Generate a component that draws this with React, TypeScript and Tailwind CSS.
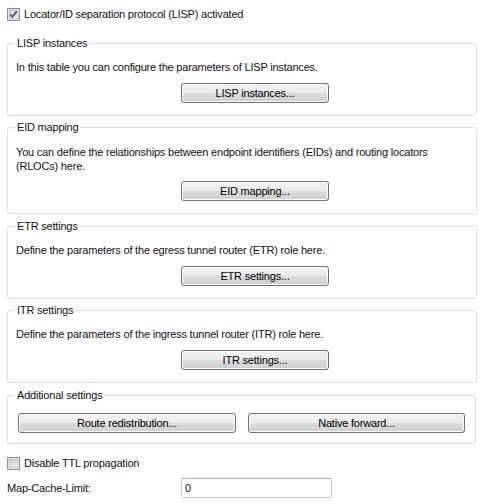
import React from "react";

function CheckBox({ checked }: { checked: boolean }) {
  return (
    <svg width="13" height="13" viewBox="0 0 13 13" className="shrink-0 block">
      <defs>
        <linearGradient id={checked ? "gc" : "gu"} x1="0" y1="0" x2="1" y2="1">
          <stop offset="0" stopColor={checked ? "#cbcfd5" : "#c8c8c8"} />
          <stop offset="1" stopColor={checked ? "#f4f6f8" : "#f0f0f0"} />
        </linearGradient>
      </defs>
      <rect x="0.5" y="0.5" width="12" height="12" fill="#fff" stroke="#8e8f8f" />
      <rect x="2" y="2" width="9" height="9" fill={`url(#${checked ? "gc" : "gu"})`} stroke="#aeb3b9" strokeWidth="0.8" />
      {checked && (
        <path d="M3.2 6.4 L5.4 8.8 L9.8 3.4" fill="none" stroke="#3e5891" strokeWidth="1.8" />
      )}
    </svg>
  );
}

function WinButton({ children, className = "" }: { children: React.ReactNode; className?: string }) {
  return (
    <button
      className={`h-[20px] rounded-[3px] border border-[#707070] bg-[linear-gradient(#f2f2f2_0%,#ebebeb_50%,#dddddd_51%,#cfcfcf_100%)] text-[11px] leading-[13px] tracking-[-0.2px] text-black shadow-[inset_0_0_0_1px_#fcfcfc] ${className}`}
    >
      {children}
    </button>
  );
}

function Group({
  title,
  children,
  className = "",
}: {
  title: string;
  children: React.ReactNode;
  className?: string;
}) {
  return (
    <div className={`relative rounded-[3px] border border-[#d5dfe5] ${className}`}>
      <span className="absolute left-[7px] top-[-7px] bg-white px-[2px] leading-[13px]">{title}</span>
      {children}
    </div>
  );
}

export default function App() {
  return (
    <div
      className="w-[483px] h-[504px] bg-white text-[11px] leading-[13px] tracking-[-0.2px] text-[#111] px-[7px] pt-[8px]"
      style={{ fontFamily: '"Liberation Sans", Arial, sans-serif' }}
    >
      <div className="flex items-center gap-[4px] h-[13px]">
        <CheckBox checked />
        <span>Locator/ID separation protocol (LISP) activated</span>
      </div>

      <Group title="LISP instances" className="mt-[22px] w-[470px] pt-[17px] pb-[12px] pl-[8px]">
        <div>In this table you can configure the parameters of LISP instances.</div>
        <WinButton className="mt-[9px] ml-[165px] w-[148px]">LISP instances...</WinButton>
      </Group>

      <Group title="EID mapping" className="mt-[11px] w-[470px] pt-[17px] pb-[12px] pl-[8px]">
        <div className="leading-[14px]">
          You can define the relationships between endpoint identifiers (EIDs) and routing locators
          <br />
          (RLOCs) here.
        </div>
        <WinButton className="mt-[8px] ml-[165px] w-[148px]">EID mapping...</WinButton>
      </Group>

      <Group title="ETR settings" className="mt-[12px] w-[470px] pt-[17px] pb-[12px] pl-[8px]">
        <div>Define the parameters of the egress tunnel router (ETR) role here.</div>
        <WinButton className="mt-[9px] ml-[165px] w-[148px]">ETR settings...</WinButton>
      </Group>

      <Group title="ITR settings" className="mt-[11px] w-[470px] pt-[17px] pb-[12px] pl-[8px]">
        <div>Define the parameters of the ingress tunnel router (ITR) role here.</div>
        <WinButton className="mt-[9px] ml-[165px] w-[148px]">ITR settings...</WinButton>
      </Group>

      <Group title="Additional settings" className="mt-[12px] w-[469px] pt-[17px] pb-[10px] pl-[10px]">
        <div className="flex gap-[12px]">
          <WinButton className="w-[218px]">Route redistribution...</WinButton>
          <WinButton className="w-[217px]">Native forward...</WinButton>
        </div>
      </Group>

      <div className="mt-[13px] flex items-center gap-[4px] h-[13px]">
        <CheckBox checked={false} />
        <span>Disable TTL propagation</span>
      </div>

      <div className="mt-[8px] flex items-center h-[20px]">
        <span className="w-[174px]">Map-Cache-Limit:</span>
        <div className="w-[151px] h-[20px] rounded-[2px] border border-[#c5c9cf] border-t-[#abadb3] pl-[3px] flex items-center">
          0
        </div>
      </div>
    </div>
  );
}
